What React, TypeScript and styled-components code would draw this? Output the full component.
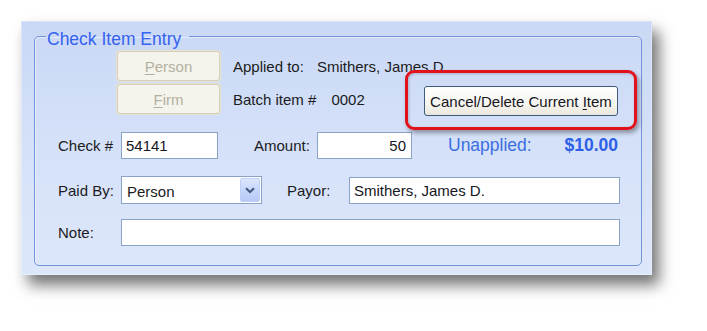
import React from "react";
import styled, { createGlobalStyle } from "styled-components";

const GlobalStyle = createGlobalStyle`
  html, body {
    margin: 0;
    padding: 0;
    background: #ffffff;
  }
  body {
    font-family: "Liberation Sans", Arial, sans-serif;
    font-size: 15px;
    color: #1b1b22;
  }
  * {
    box-sizing: border-box;
  }
`;

const Page = styled.div`
  padding: 21px;
  width: 707px;
  height: 331px;
`;

const Window = styled.div`
  width: 631px;
  padding: 2px 10px 9px 13px;
  background: linear-gradient(to bottom, #cad8f5 0%, #d6e2f9 55%, #dde7fb 100%);
  box-shadow: inset 0 0 0 1px rgba(255, 255, 255, 0.35),
    7px 10px 14px rgba(0, 0, 0, 0.55);
`;

const GroupBox = styled.fieldset`
  margin: 0;
  padding: 2px 21px 19px 23px;
  border: 1px solid #7393da;
  border-radius: 5px;
  box-shadow: inset 1px 1px 0 rgba(255, 255, 255, 0.45);
  min-width: 0;
`;

const Legend = styled.legend`
  margin-left: -12px;
  padding: 6px 8px 0 1px;
  line-height: 20px;
  font-size: 17.5px;
  color: #3462f2;
`;

const TopRow = styled.div`
  display: flex;
  height: 63px;
`;

const ButtonStack = styled.div`
  display: flex;
  flex-direction: column;
  gap: 3px;
  margin-left: 59px;
  flex-shrink: 0;
`;

const DisabledButton = styled.button`
  width: 103px;
  height: 30px;
  padding: 0;
  font-family: inherit;
  font-size: 15px;
  color: #b3b09f;
  background: #f4f3ec;
  border: 1px solid #d3cfb9;
  border-radius: 3px;
  box-shadow: 0 0 0 1px #e6e3d4;
  u {
    text-underline-offset: 2px;
  }
`;

const InfoColumn = styled.div`
  display: flex;
  flex-direction: column;
  gap: 3px;
  width: 190px;
  margin-left: 13px;
  flex-shrink: 0;
  white-space: nowrap;
`;

const InfoLine = styled.div`
  display: flex;
  align-items: center;
  height: 30px;
`;

const InfoLabel = styled.span<{ $gap: number }>`
  margin-right: ${(p) => p.$gap}px;
`;

const CancelWrap = styled.div`
  position: relative;
  margin-left: auto;
  margin-right: 2px;
  align-self: flex-end;
  margin-bottom: -2px;
  flex-shrink: 0;
`;

const CancelButton = styled.button`
  display: block;
  width: 194px;
  height: 30px;
  padding: 0;
  font-family: inherit;
  font-size: 15px;
  color: #16161e;
  background: linear-gradient(to bottom, #ffffff 0%, #f6f5ef 60%, #e9e7dc 100%);
  border: 1px solid #3f5b7c;
  border-radius: 3px;
  white-space: nowrap;
  u {
    text-underline-offset: 2px;
  }
`;

const Highlight = styled.div`
  position: absolute;
  top: -16px;
  left: -19px;
  right: -19px;
  bottom: -14px;
  border: 3px solid #e2121c;
  border-radius: 9px;
  box-shadow: 2px 3px 4px rgba(0, 0, 0, 0.35),
    inset 1px 1px 3px rgba(0, 0, 0, 0.2);
  pointer-events: none;
`;

const Row = styled.div<{ $top: number }>`
  display: flex;
  align-items: center;
  margin-top: ${(p) => p.$top}px;
`;

const Label = styled.span<{ $width: number; $left?: number }>`
  width: ${(p) => p.$width}px;
  margin-left: ${(p) => p.$left ?? 0}px;
  flex-shrink: 0;
  white-space: nowrap;
`;

const TextBox = styled.div<{ $width?: number; $align?: string }>`
  ${(p) => (p.$width ? `width: ${p.$width}px;` : "flex: 1;")}
  height: 27px;
  line-height: 25px;
  padding: 0 5px 0 4px;
  background: #ffffff;
  border: 1px solid #8aa3c4;
  text-align: ${(p) => p.$align ?? "left"};
  color: #16161e;
  white-space: nowrap;
`;

const SelectBox = styled.div`
  display: flex;
  align-items: center;
  width: 141px;
  height: 28px;
  padding: 1px;
  padding-left: 5px;
  background: #ffffff;
  border: 1px solid #8aa3c4;
`;

const SelectText = styled.span`
  flex: 1;
  padding-top: 2px;
`;

const DropButton = styled.div`
  width: 20px;
  height: 24px;
  display: flex;
  align-items: center;
  justify-content: center;
  border: 1px solid #bccff6;
  border-radius: 2px;
  background: linear-gradient(to bottom, #dbe6fe 0%, #c6d6fb 50%, #b8cbf6 100%);
`;

const Unapplied = styled.span`
  margin-left: 36px;
  font-size: 17.5px;
  color: #3c6ee0;
  white-space: nowrap;
`;

const Amount = styled.span`
  margin-left: auto;
  margin-right: 2px;
  font-size: 17.5px;
  font-weight: bold;
  color: #2d60e6;
`;

const Chevron = () => (
  <svg width="10" height="7" viewBox="0 0 10 7">
    <path d="M1 1.2 L5 5 L9 1.2" fill="none" stroke="#46587e" strokeWidth="2" />
  </svg>
);

export default function App() {
  return (
    <Page>
      <GlobalStyle />
      <Window>
        <GroupBox>
          <Legend>Check Item Entry</Legend>
          <TopRow>
            <ButtonStack>
              <DisabledButton disabled>
                <u>P</u>erson
              </DisabledButton>
              <DisabledButton disabled>
                <u>F</u>irm
              </DisabledButton>
            </ButtonStack>
            <InfoColumn>
              <InfoLine>
                <InfoLabel $gap={13}>Applied to:</InfoLabel>
                <span>Smithers, James D.</span>
              </InfoLine>
              <InfoLine>
                <InfoLabel $gap={15}>Batch item #</InfoLabel>
                <span>0002</span>
              </InfoLine>
            </InfoColumn>
            <CancelWrap>
              <CancelButton>
                Cancel/Delete Current <u>I</u>tem
              </CancelButton>
              <Highlight />
            </CancelWrap>
          </TopRow>
          <Row $top={18}>
            <Label $width={63}>Check #</Label>
            <TextBox $width={97}>54141</TextBox>
            <Label $width={63} $left={36}>
              Amount:
            </Label>
            <TextBox $width={95} $align="right">
              50
            </TextBox>
            <Unapplied>Unapplied:</Unapplied>
            <Amount>$10.00</Amount>
          </Row>
          <Row $top={17}>
            <Label $width={63}>Paid By:</Label>
            <SelectBox>
              <SelectText>Person</SelectText>
              <DropButton>
                <Chevron />
              </DropButton>
            </SelectBox>
            <Label $width={62} $left={25}>
              Payor:
            </Label>
            <TextBox>Smithers, James D.</TextBox>
          </Row>
          <Row $top={15}>
            <Label $width={63}>Note:</Label>
            <TextBox />
          </Row>
        </GroupBox>
      </Window>
    </Page>
  );
}
